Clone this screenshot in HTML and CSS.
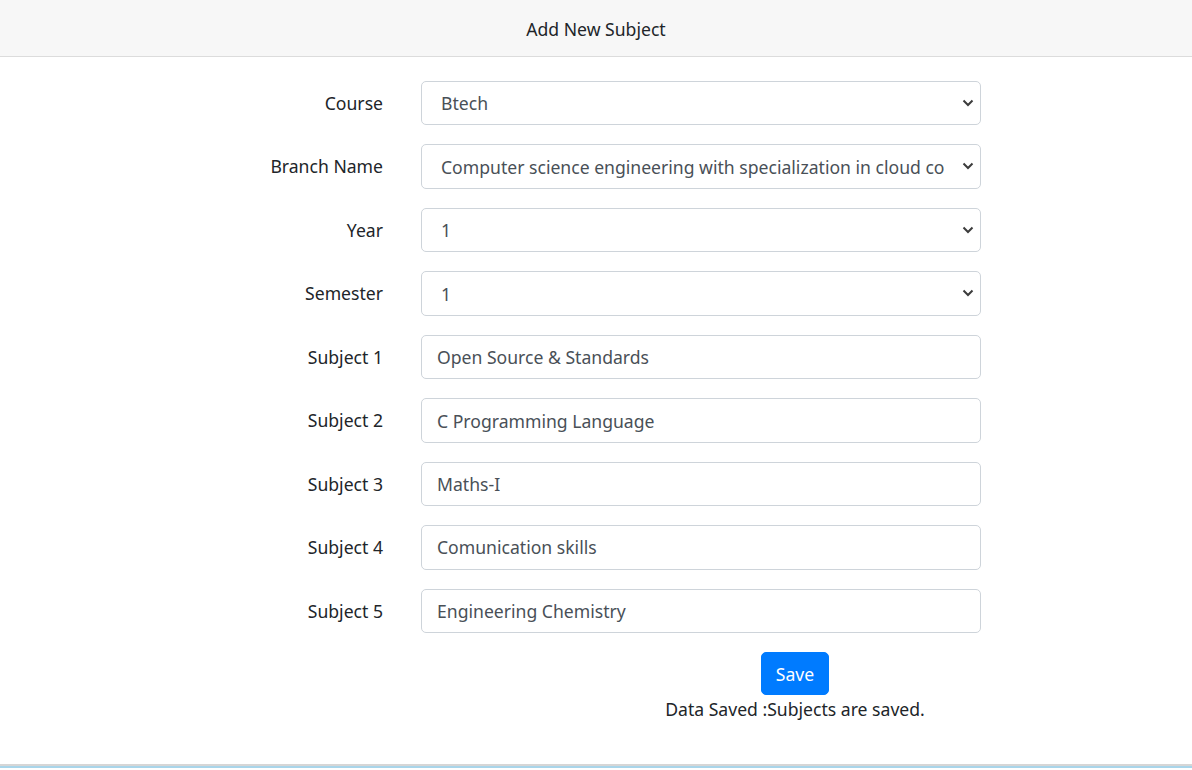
FILE: index.html
```html
<!DOCTYPE html>
<html lang="en">
<head>
<meta charset="utf-8">
<title>Add New Subject</title>
<link rel="stylesheet" href="styles.css">
</head>
<body>
<div class="card">
  <div class="card-header">Add New Subject</div>
  <div class="card-body">
    <form class="form">
      <label class="label">Course</label>
      <div class="select-wrap">
        <select class="control select"><option>Btech</option></select>
        <svg class="chev" width="12" height="8" viewBox="0 0 12 8"><path d="M1.5 1.5 L6 6 L10.5 1.5" fill="none" stroke="#3c3c3c" stroke-width="2"/></svg>
      </div>

      <label class="label">Branch Name</label>
      <div class="select-wrap">
        <select class="control select"><option>Computer science engineering with specialization in cloud computing</option></select>
        <svg class="chev" width="12" height="8" viewBox="0 0 12 8"><path d="M1.5 1.5 L6 6 L10.5 1.5" fill="none" stroke="#3c3c3c" stroke-width="2"/></svg>
      </div>

      <label class="label">Year</label>
      <div class="select-wrap">
        <select class="control select"><option>1</option></select>
        <svg class="chev" width="12" height="8" viewBox="0 0 12 8"><path d="M1.5 1.5 L6 6 L10.5 1.5" fill="none" stroke="#3c3c3c" stroke-width="2"/></svg>
      </div>

      <label class="label">Semester</label>
      <div class="select-wrap">
        <select class="control select"><option>1</option></select>
        <svg class="chev" width="12" height="8" viewBox="0 0 12 8"><path d="M1.5 1.5 L6 6 L10.5 1.5" fill="none" stroke="#3c3c3c" stroke-width="2"/></svg>
      </div>

      <label class="label">Subject 1</label>
      <input class="control" type="text" value="Open Source &amp; Standards">

      <label class="label">Subject 2</label>
      <input class="control" type="text" value="C Programming Language">

      <label class="label">Subject 3</label>
      <input class="control" type="text" value="Maths-I">

      <label class="label">Subject 4</label>
      <input class="control" type="text" value="Comunication skills">

      <label class="label">Subject 5</label>
      <input class="control" type="text" value="Engineering Chemistry">
    </form>
    <div class="actions">
      <button class="btn" type="button">Save</button>
      <div class="msg">Data Saved :Subjects are saved.</div>
    </div>
  </div>
</div>
<div class="strip"></div>
</body>
</html>
```

FILE: styles.css
```css
* { box-sizing: border-box; }
html, body { margin: 0; padding: 0; background: #fff; }
body {
  font-family: "Noto Sans", "Open Sans", "Liberation Sans", sans-serif;
  font-size: 17.6px;
  color: #212529;
  height: 770px;
  overflow: hidden;
}
.card {
  border-bottom: 2px solid #d6d6d6;
}
.card-header {
  height: 57px;
  background: #f7f7f7;
  border-bottom: 1px solid #dcdcdc;
  display: flex;
  align-items: center;
  justify-content: center;
  padding-top: 1px;
}
.card-body {
  padding: 24px 0 40px;
}
.form {
  width: 981px;
  display: grid;
  grid-template-columns: 1fr 560px;
  column-gap: 38px;
  row-gap: 19.3px;
  align-items: center;
}
.label {
  text-align: right;
  line-height: 1.5;
}
.control {
  display: block;
  width: 100%;
  height: 44.2px;
  border: 1px solid #ced4da;
  border-radius: 5px;
  background: #fff;
  color: #495057;
  font: inherit;
  padding: 0 15px;
  outline: none;
}
.select-wrap { position: relative; }
.select {
  appearance: none;
  -webkit-appearance: none;
  padding: 0 36px 0 19px;
}
.chev {
  position: absolute;
  right: 7px;
  top: 18px;
  pointer-events: none;
}
.actions {
  margin-left: 609px;
  width: 372px;
  margin-top: 19px;
  display: flex;
  flex-direction: column;
  align-items: center;
}
.btn {
  font: inherit;
  background: #007bff;
  color: #fff;
  border: 1px solid #007bff;
  border-radius: 5px;
  height: 43px;
  padding: 0 14px;
}
.msg {
  line-height: 29px;
}
.strip {
  height: 2px;
  background: #a9d5ea;
}
```
